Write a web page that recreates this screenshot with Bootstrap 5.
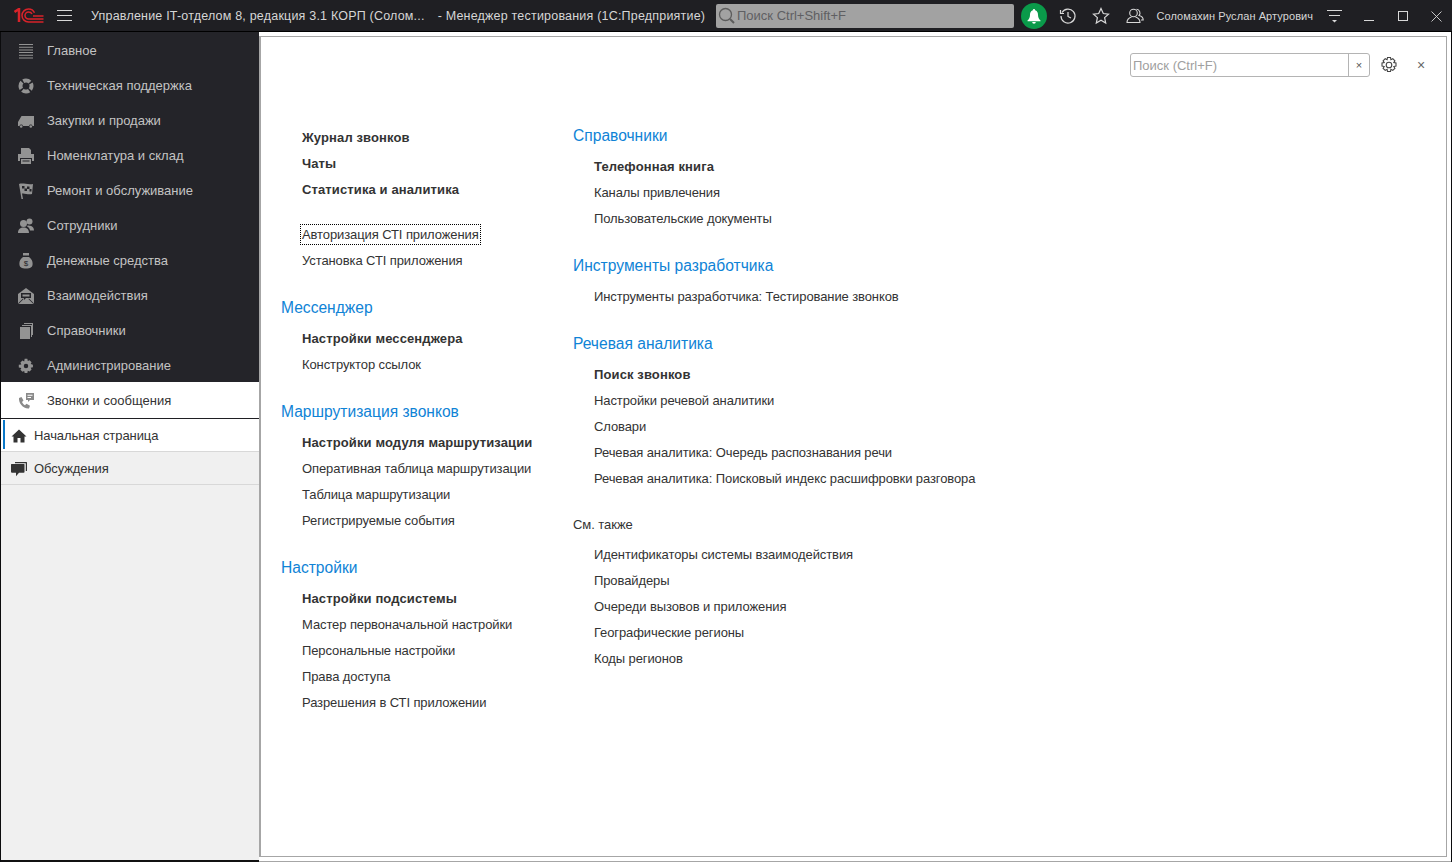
<!DOCTYPE html>
<html lang="ru"><head><meta charset="utf-8"><title>1C</title>
<link rel="stylesheet" href="https://cdn.jsdelivr.net/npm/bootstrap@5.3.0/dist/css/bootstrap.min.css">
<style>
html,body{height:100%;margin:0;overflow:hidden}
body{font-family:"Liberation Sans",Arial,sans-serif;font-size:13px;color:#333;background:#fff}
.app-shell{width:1452px;height:862px;border:solid #0b0b0d;border-width:0 1px 0 1px;background:#fff}
.top-bar{height:32px;background:#1f1f23;border-bottom:1px solid #000;color:#d8d8d8;flex:none;margin:0 -1px}
.logo-slot{width:57px;padding-left:14px;flex:none}
.burger-slot{width:34px;flex:none}
.app-title{font-size:12.5px;width:625px;flex:none;white-space:nowrap;color:#d6d6d6;letter-spacing:.2px;padding-top:1px}
.title-tail{margin-left:13px}
.glob-search{width:298px;height:24px;flex:none;background:#a2a2a2;border-radius:2px;color:#5f5f62;font-size:13px;padding-left:2px;gap:2px}
.bell-dot{width:26px;height:26px;flex:none;border-radius:50%;background:#0a9a4a;margin-left:7px;margin-right:4px}
.user-name{font-size:11px;color:#d6d6d6;white-space:nowrap;width:166.500px;flex:none;padding:1px 0 0 5px;letter-spacing:.08px}
.tb-ico{width:33.500px;flex:none}
.filter-ico{width:34px;flex:none}
.win-ico{width:34px;flex:none}
.win-last{width:32px;flex:none}
.side-col{width:258px;flex:none;background:#f0f0f0;border-bottom:2px solid #111}
.side-dark{background:#242429;height:350px}
.sec-item{height:35px;color:#c3c3c3;padding:2px 0 0 16px;gap:12px;white-space:nowrap}
.sec-item svg{width:18px;height:18px;flex:none;fill:#939393}
.sec-item svg .cut{fill:#242429}
.sec-item svg .hollow{fill:none;stroke:#939393}
.sec-active{background:#fff;color:#333;border-bottom:1px solid #1f1f23;height:37px;padding-top:1px}
.sec-active svg{fill:#8a8a8a}
.sec-active svg .cut{fill:#fff}
.open-tab{height:33px;border-bottom:1px solid #d8d8d8;padding:1px 0 0 9px;gap:6px;color:#333;position:relative;letter-spacing:-.08px}
.open-tab svg{width:18px;height:18px;flex:none;fill:#333}
.tab-on{background:#fff}
.tab-on::before{content:"";position:absolute;left:2px;top:1px;bottom:2px;width:2px;background:#0b78c8}
.main-wrap{flex:1;min-width:0;padding:4px 4px 4px 0;background:#fff;border-bottom:1px solid #a6a6a6}
.main-frame{height:100%;border:solid #a6a6a6;border-width:1px 1px 1px 2px;position:relative;background:#fff}
.find-row{position:absolute;left:869px;top:16px;height:24px}
.find-box{width:240px;height:24px;border:1px solid #b4b4b4;border-radius:3px;color:#a0a0a0;font-size:13px;background:#fff}
.find-input{flex:1;padding-left:2px;line-height:24px}
.find-x{width:21px;border-left:1px solid #b4b4b4;text-align:center;color:#555;font-size:11px;line-height:22px}
.gear-slot{margin-left:10px;line-height:0}
.find-close{margin-left:19px;color:#666;font-size:14px}
.cols{padding-top:88px;padding-left:20px}
.col-a{width:292px}
.col-b{width:500px;margin-top:-1px}
.nav-entry{height:26px;line-height:26px;padding-left:21px;color:#333;white-space:nowrap;letter-spacing:-.1px}
.nav-strong{font-weight:700;letter-spacing:.12px}
.nav-head{height:24px;line-height:24px;font-size:15.600px;color:#0f83d6;margin:22px 0 6px}
.nav-head.first-h{margin-top:0}
.see-also{height:18px;line-height:18px;margin:24px 0 8px;color:#333;font-size:13px;letter-spacing:-.05px}
.gap-after{margin-top:19px}
.focus-text{display:inline-block;outline:1px dotted #000;line-height:17px;padding:0;outline-offset:1px}
</style></head><body>
<div class="app-shell d-flex flex-column">
 <div class="top-bar d-flex align-items-center">
  <div class="logo-slot d-flex"><svg width="30" height="15" viewBox="0 0 30 15" fill="none" stroke="#d8232a" stroke-width="1.500"><path d="M0.500 4 L5 1 V14" stroke-width="2.500"/><path d="M29.500 14H14.500a6.500 6.500 0 1 1 0-13c3 0 5 1.500 6 3.800"/><path d="M29.500 11H14.500a3.500 3.500 0 1 1 0-7c1.800 0 3 .8 3.500 2"/><path d="M29.500 8H19"/></svg></div>
  <div class="burger-slot d-flex"><svg width="15" height="13" viewBox="0 0 15 13" stroke="#d8d8d8" stroke-width="1"><path d="M0 1.500H15M0 6.500H15M0 11.500H15"/></svg></div>
  <div class="app-title">Управление IT-отделом 8, редакция 3.1 КОРП (Солом...<span class="title-tail">- Менеджер тестирования (1С:Предприятие)</span></div>
  <div class="glob-search d-flex align-items-center"><svg width="17" height="18" viewBox="0 0 17 18" fill="none" stroke="#5c5c5c" stroke-width="1.300"><circle cx="7.500" cy="7.500" r="6"/><path d="M12 12l4 4" stroke-width="2"/></svg><span>Поиск Ctrl+Shift+F</span></div>
  <div class="bell-dot d-flex align-items-center justify-content-center"><svg width="16" height="16" viewBox="0 0 16 16" fill="#fff"><path d="M8 1a1.200 1.200 0 0 0-1.200 1.200C4.500 3 4 5 4 7c0 3-1.500 4.500-2.500 5.500v.7h13v-.7C13.500 11.500 12 10 12 7c0-2-.5-4-2.800-4.800A1.200 1.200 0 0 0 8 1zM6.200 14a1.800 1.800 0 0 0 3.600 0z"/></svg></div>
  <div class="tb-ico text-center"><svg width="18" height="18" viewBox="0 0 18 18" fill="none" stroke="#d8d8d8" stroke-width="1.200"><path d="M3 5.500A7 7 0 1 1 2 9"/><path d="M1.500 3v3.500H5"/><path d="M9 5v4.500l3 1.500"/></svg></div>
  <div class="tb-ico text-center"><svg width="18" height="18" viewBox="0 0 18 18" fill="none" stroke="#d8d8d8" stroke-width="1.200"><path d="M9 1.500l2.300 5 5.200.6-3.900 3.500 1.100 5.400L9 13.300 4.300 16l1.100-5.400L1.500 7.100l5.200-.6z"/></svg></div>
  <div class="tb-ico text-center"><svg width="18" height="18" viewBox="0 0 18 18" fill="none" stroke="#d8d8d8" stroke-width="1.100"><circle cx="7.500" cy="6" r="3.800"/><path d="M5.500 10c-2 .7-4.500 1.700-4.500 5.500h13c0-3.800-2.500-4.800-4.500-5.500M10.500 2.300a3.700 3.700 0 0 1 2.500 6.200c2 .5 4.200 1.500 4.200 4.500H15"/></svg></div>
  <div class="user-name">Соломахин Руслан Артурович</div>
  <div class="filter-ico text-center"><svg width="16" height="16" viewBox="0 0 16 16" stroke="#d8d8d8" fill="#d8d8d8"><path d="M0 2.500H15M2 7.500H13" fill="none"/><path d="M5 12h5l-2.500 2.500z" stroke="none"/></svg></div>
  <div class="win-ico text-center"><svg width="10" height="12" viewBox="0 0 10 12" stroke="#d8d8d8"><path d="M0 10.500H10"/></svg></div>
  <div class="win-ico text-center"><svg width="10" height="10" viewBox="0 0 10 10" fill="none" stroke="#d8d8d8"><rect x=".5" y=".5" width="9" height="9"/></svg></div>
  <div class="win-last text-center"><svg width="11" height="11" viewBox="0 0 11 11" stroke="#d8d8d8" stroke-width=".9"><path d="M.5 .5L10.500 10.500M10.500 .5L.5 10.500"/></svg></div>
 </div>
 <div class="d-flex flex-grow-1" style="min-height:0">
  <div class="side-col">
   <div class="side-dark">
    <div class="sec-item d-flex align-items-center"><svg viewBox="0 0 18 18"><path d="M2 2h14v1H2zM2 4.700h14v1H2zM2 7.400h14v1H2zM2 10.100h14v1H2zM2 12.800h14v1H2zM2 15.500h14v1H2z"/></svg><span>Главное</span></div>
    <div class="sec-item d-flex align-items-center"><svg viewBox="0 0 18 18"><circle class="hollow" cx="9" cy="9" r="5.500" stroke-width="4" stroke-dasharray="7.100 1.540" stroke-dashoffset="3.500"/></svg><span>Техническая поддержка</span></div>
    <div class="sec-item d-flex align-items-center"><svg viewBox="0 0 18 18"><path d="M1 14v-4l3.500-6H17v10h-1.500a1.800 1.800 0 0 0-3.500 0H6a1.800 1.800 0 0 0-3.500 0z"/><circle cx="4.200" cy="14.500" r="1.300"/><circle cx="13.800" cy="14.500" r="1.300"/></svg><span>Закупки и продажи</span></div>
    <div class="sec-item d-flex align-items-center"><svg viewBox="0 0 18 18"><path d="M4 1h8l2 2v4H4zM1 7h16v7h-2v-3H3v3H1z"/><path d="M4 12h10v5H4z"/><path class="cut" d="M5.500 13.500h7v1h-7z"/></svg><span>Номенклатура и склад</span></div>
    <div class="sec-item d-flex align-items-center"><svg viewBox="0 0 18 18"><path d="M2 2c4-1.500 8 1 14 0l-1 10c-4 1-7-1-10-.5l1 5.500H4.500z"/><path class="cut" d="M5 4h2.500v2.500H5zM10 4.500h2.500V7H10zM7.500 6.500H10V9H7.500zM12.500 7h2v2.500h-2z"/></svg><span>Ремонт и обслуживание</span></div>
    <div class="sec-item d-flex align-items-center"><svg viewBox="0 0 18 18"><circle cx="6.500" cy="6.500" r="3.500"/><circle cx="12.500" cy="4.500" r="3"/><path d="M1 16c0-4 2.500-5.500 5.500-5.500S12 12 12 16zM10.500 8.500c3.500 0 6.500 1 6.500 5h-4c-.3-2-1.500-3.500-3-4z"/></svg><span>Сотрудники</span></div>
    <div class="sec-item d-flex align-items-center"><svg viewBox="0 0 18 18"><path d="M6 1h6v2.500H6zM6 5h6c3 2 4 5 3.500 8-.3 2-2 3.500-6.500 3.500S2.800 15 2.500 13C2 10 3 7 6 5z"/><text class="cut" x="9" y="14" font-size="8" text-anchor="middle" font-family="Liberation Sans">$</text></svg><span>Денежные средства</span></div>
    <div class="sec-item d-flex align-items-center"><svg viewBox="0 0 18 18"><path d="M1 7l8-6 8 6v10H1z"/><path class="cut" d="M4 6h10v5H9l-2 2v-2H4zM1 16.500l5-5 .6.6-5 5zM17 16.500l-5-5-.6.6 5 5z"/><path d="M5.500 7.500h7v2h-7z"/></svg><span>Взаимодействия</span></div>
    <div class="sec-item d-flex align-items-center"><svg viewBox="0 0 18 18"><path d="M3 5h10v12H3zM5 3h10v12h-1V4H5zM7 1h9v12h-1V2H7z"/></svg><span>Справочники</span></div>
    <div class="sec-item d-flex align-items-center"><svg viewBox="-1 -1 20 20"><path fill-rule="evenodd" d="M7.500 1h3l.5 2.500 2-.9 2.200 2.200-1 2 2.500.7v3l-2.500.5 1 2-2.200 2.200-2-1-.5 2.500h-3L7 14.500l-2 1L2.800 13.300l1-2L1 10.700v-3l2.800-.5-1-2L5 3l2 .9zM9 6.500a2.500 2.500 0 1 0 0 5 2.500 2.500 0 0 0 0-5z"/></svg><span>Администрирование</span></div>
   </div>
   <div class="sec-item sec-active d-flex align-items-center"><svg viewBox="0 0 18 18"><path d="M9 1h8v7h-4l-2 2V8H9z"/><path class="cut" d="M10.500 2.800h5v1h-5zM10.500 5h3.500v1h-3.500z"/><path d="M2 6l2.500-1 2 3.500-1.500 1.500c.7 1.500 1.800 2.600 3 3.200l1.500-1.500 3.500 2-1 2.800C6 17 1.500 11 2 6z"/></svg><span>Звонки и сообщения</span></div>
   <div class="open-tab tab-on d-flex align-items-center"><svg viewBox="0 0 18 18"><path d="M9 2.500l7.500 7H14.500v6h-4v-4.500h-3v4.500h-4v-6H1.500z"/></svg><span>Начальная страница</span></div>
   <div class="open-tab d-flex align-items-center"><svg viewBox="0 0 18 18"><path d="M5 2h11.500a.8.8 0 0 1 .5.8V11h-1.200V3.200H5zM1.500 4H14a.5.5 0 0 1 .5.5V12a.8.8 0 0 1-.8.8H9l-3 3.500v-3.500H2a1 1 0 0 1-1-1V4.500a.5.5 0 0 1 .5-.5z"/></svg><span>Обсуждения</span></div>
  </div>
  <div class="main-wrap">
   <div class="main-frame">
    <div class="find-row d-flex align-items-center">
     <div class="find-box d-flex"><div class="find-input">Поиск (Ctrl+F)</div><div class="find-x">×</div></div>
     <div class="gear-slot"><svg width="18" height="18" viewBox="0 0 18 18" fill="none" stroke="#444" stroke-width="1.100"><circle cx="9" cy="9" r="2.800"/><path d="M7.500 1.500h3l.4 2.200 1.900-1 2.100 2.100-1.100 1.800 2.200.4v3l-2.200.5 1.100 1.800-2.100 2.100-1.900-1.100-.4 2.200h-3l-.4-2.200-1.900 1.100-2.100-2.100 1.100-1.800-2.200-.5v-3l2.200-.4-1.100-1.800 2.100-2.100 1.900 1z"/></svg></div>
     <div class="find-close">×</div>
    </div>
    <div class="cols d-flex">
     <div class="col-a">
      <div class="nav-entry nav-strong">Журнал звонков</div>
      <div class="nav-entry nav-strong">Чаты</div>
      <div class="nav-entry nav-strong">Статистика и аналитика</div>
      <div class="nav-entry gap-after"><span class="focus-text">Авторизация СТI приложения</span></div>
      <div class="nav-entry">Установка СТI приложения</div>
      <div class="nav-head">Мессенджер</div>
      <div class="nav-entry nav-strong">Настройки мессенджера</div>
      <div class="nav-entry">Конструктор ссылок</div>
      <div class="nav-head">Маршрутизация звонков</div>
      <div class="nav-entry nav-strong">Настройки модуля маршрутизации</div>
      <div class="nav-entry">Оперативная таблица маршрутизации</div>
      <div class="nav-entry">Таблица маршрутизации</div>
      <div class="nav-entry">Регистрируемые события</div>
      <div class="nav-head">Настройки</div>
      <div class="nav-entry nav-strong">Настройки подсистемы</div>
      <div class="nav-entry">Мастер первоначальной настройки</div>
      <div class="nav-entry">Персональные настройки</div>
      <div class="nav-entry">Права доступа</div>
      <div class="nav-entry">Разрешения в СТI приложении</div>
     </div>
     <div class="col-b">
      <div class="nav-head first-h">Справочники</div>
      <div class="nav-entry nav-strong">Телефонная книга</div>
      <div class="nav-entry">Каналы привлечения</div>
      <div class="nav-entry">Пользовательские документы</div>
      <div class="nav-head">Инструменты разработчика</div>
      <div class="nav-entry">Инструменты разработчика: Тестирование звонков</div>
      <div class="nav-head">Речевая аналитика</div>
      <div class="nav-entry nav-strong">Поиск звонков</div>
      <div class="nav-entry">Настройки речевой аналитики</div>
      <div class="nav-entry">Словари</div>
      <div class="nav-entry">Речевая аналитика: Очередь распознавания речи</div>
      <div class="nav-entry">Речевая аналитика: Поисковый индекс расшифровки разговора</div>
      <div class="see-also">См. также</div>
      <div class="nav-entry">Идентификаторы системы взаимодействия</div>
      <div class="nav-entry">Провайдеры</div>
      <div class="nav-entry">Очереди вызовов и приложения</div>
      <div class="nav-entry">Географические регионы</div>
      <div class="nav-entry">Коды регионов</div>
     </div>
    </div>
   </div>
  </div>
 </div>
</div>
<script src="https://cdn.jsdelivr.net/npm/bootstrap@5.3.0/dist/js/bootstrap.bundle.min.js"></script>
</body></html>
